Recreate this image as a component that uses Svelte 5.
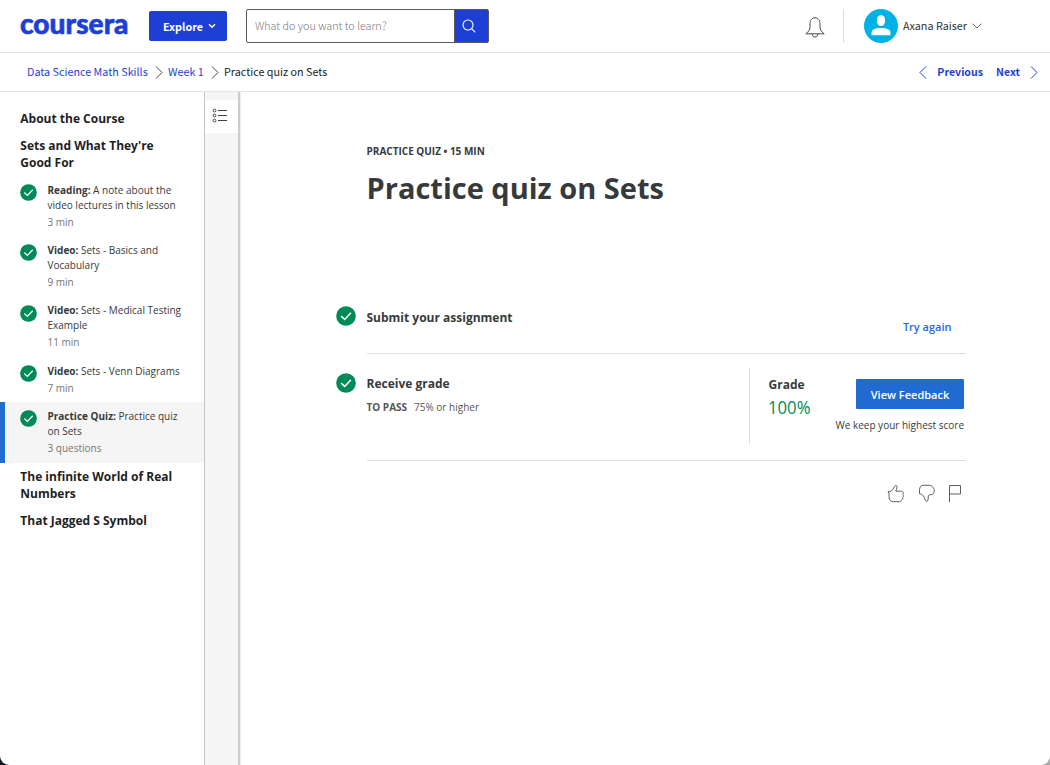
<script>
  const items = [
    { kind: 'Reading:', title: 'A note about the video lectures in this lesson', meta: '3 min' },
    { kind: 'Video:', title: 'Sets - Basics and Vocabulary', meta: '9 min' },
    { kind: 'Video:', title: 'Sets - Medical Testing Example', meta: '11 min' },
    { kind: 'Video:', title: 'Sets - Venn Diagrams', meta: '7 min' },
    { kind: 'Practice Quiz:', title: 'Practice quiz on Sets', meta: '3 questions', active: true }
  ];
</script>

{#snippet check(size)}
  <svg class="check" width={size} height={size} viewBox="0 0 20 20">
    <circle cx="10" cy="10" r="9.8" fill="#008a57" />
    <path d="M5.1 10.1 8.7 13.4 15 6.7" fill="none" stroke="#fff" stroke-width="1.5" />
  </svg>
{/snippet}

{#snippet chevron(d, color)}
  <svg class="chevron" width="8" height="13" viewBox="0 0 8 13"><path {d} fill="none" stroke={color} /></svg>
{/snippet}

<div class="page">
  <header>
    <svg class="logo" width="110" height="40" viewBox="0 0 110 40">
      <text x="0" y="26.6" textLength="108.5" lengthAdjust="spacingAndGlyphs">coursera</text>
    </svg>
    <button class="explore"><span>Explore</span>
      <svg width="8" height="6" viewBox="0 0 8 6"><path d="M1 1.2 4 4.200 7 1.200" fill="none" stroke="#fff" stroke-width="1.500" /></svg>
    </button>
    <div class="search">
      <span class="placeholder">What do you want to learn?</span>
      <span class="go">
        <svg width="14" height="14" viewBox="0 0 14 14"><g fill="none" stroke="#fff" stroke-width="1.100"><circle cx="6" cy="6" r="5" /><path d="M9.600 9.600 13.300 13.300" /></g></svg>
      </span>
    </div>
    <svg class="bell" width="20" height="21" viewBox="0 0 20 21">
      <g fill="none" stroke="#444b52">
        <path d="M.8 16.800C3.600 14.800 5 12.800 5 9.800V6.800C5 3.400 6.900.8 10 .8s5 2.600 5 6v3c0 3 1.400 5 4.200 7z" stroke-linejoin="round" />
        <path d="M7.200 17c.2 2 1.300 3 2.800 3s2.600-1 2.800-3" />
      </g>
    </svg>
    <div class="divider"></div>
    <svg class="avatar" width="34" height="34" viewBox="0 0 34 34">
      <circle cx="17" cy="17" r="17" fill="#00b2e3" />
      <ellipse cx="17" cy="11.500" rx="4.200" ry="5.500" fill="#fff" />
      <path d="M7.500 26.200v-2.400C7.500 20.500 11 19 17 19s9.500 1.500 9.500 4.800v2.400z" fill="#fff" />
    </svg>
    <span class="user">Axana Raiser</span>
    <svg class="caret" width="10" height="6" viewBox="0 0 10 6"><path d="M.7.7 5 5 9.300.7" fill="none" stroke="#666" /></svg>
  </header>

  <nav>
    <span class="crumb link">Data Science Math Skills</span>
    {@render chevron('M1 .5 7 6.500 1 12.500', '#444')}
    <span class="crumb link">Week 1</span>
    {@render chevron('M1 .5 7 6.500 1 12.500', '#444')}
    <span class="crumb">Practice quiz on Sets</span>
    <span class="grow"></span>
    {@render chevron('M7 .5 1 6.500 7 12.500', '#1d3fd6')}
    <span class="step">Previous</span>
    <span class="step next">Next</span>
    {@render chevron('M1 .5 7 6.500 1 12.500', '#1d3fd6')}
  </nav>

  <div class="body">
    <aside>
      <h3>About the Course</h3>
      <h3>Sets and What They're Good For</h3>
      <ul>
        {#each items as it}
          <li class:active={it.active}>
            {@render check(17)}
            <div><p><b>{it.kind}</b> {it.title}</p><p class="meta">{it.meta}</p></div>
          </li>
        {/each}
      </ul>
      <h3>The infinite World of Real Numbers</h3>
      <h3>That Jagged S Symbol</h3>
    </aside>
    <div class="rail">
      <div class="tab">
        <svg width="16" height="15" viewBox="0 0 16 15"><g fill="none" stroke="#444"><circle cx="2.500" cy="2.500" r="1.400" /><circle cx="2.500" cy="7.500" r="1.400" /><circle cx="2.500" cy="12.500" r="1.400" /><path d="M6 2.500h9M6 7.500h9M6 12.500h9" /></g></svg>
      </div>
    </div>
    <main>
      <p class="kicker">PRACTICE QUIZ • 15 MIN</p>
      <h1>Practice quiz on Sets</h1>
      <section class="submit">
        {@render check(20)}
        <div class="content">
          <h2>Submit your assignment</h2>
          <span class="again">Try again</span>
        </div>
      </section>
      <section class="receive">
        {@render check(20)}
        <div class="content">
          <div class="left"><h2>Receive grade</h2><p class="pass"><b>TO PASS</b><span>75% or higher</span></p></div>
          <div class="grade"><h2>Grade</h2><strong>100%</strong></div>
          <div class="feedback"><button>View Feedback</button><p>We keep your highest score</p></div>
        </div>
      </section>
      <div class="reactions">
        <svg width="18" height="19" viewBox="0 0 18 19"><path d="M1 7.700h1.800C5.200 6.900 6.400 4.600 7.500 2.500 8.200.9 10.400 1.300 10.100 3.200c-.2 1.400-.8 2.700-1.300 4h4.800c1.600 0 2.700.8 2.700 2 0 .5-.2.900-.5 1.200.7.500.9 1.200.6 2.100-.1.500-.4.900-.8 1.200.3.600.2 1.300-.2 1.800-.3.400-.7.600-1 .7-.1 1-.9 1.500-1.900 1.500H6.200c-2.700 0-4.200-2.200-4.200-5V9.600L1 7.700" /></svg>
        <svg width="18" height="19" viewBox="0 0 18 19"><path d="M1.500 9.800V5.700C1.700 3 3 1.300 5.600 1.300h6.100c1.500 0 2.300.6 2.600 1.500 1.400.8 2 2.300 1.900 4.200 0 2.300-1.300 3.600-3.200 3.700-1.500.1-2.300.2-2.600 1.100-.5 1.400.1 2.700-.4 4.200-.5 1.600-2.300 1.500-2.600.1-.6-2-1.600-3.800-3-5.200-1.200-1-2.100-1.100-2.900-1.100" /></svg>
        <svg class="flag" width="14" height="19" viewBox="0 0 14 19"><path d="M1.500 18V1.500h11v8.500h-11" /></svg>
      </div>
    </main>
  </div>
</div>

<style>
  :global(body) { margin: 0; overflow: hidden; background: linear-gradient(90deg, #0a1320 50%, #aaa 50%); }
  .page { width: 1050px; height: 765px; overflow: hidden; background: #fff; border-radius: 0 0 9px 9px; font-family: "Open Sans", sans-serif; color: #373a3c; }
  p, h1, h2, h3, ul { margin: 0; padding: 0; }
  header, nav { display: flex; align-items: center; box-sizing: border-box; font-family: "Noto Sans CJK SC", sans-serif; white-space: nowrap; }
  header { height: 53px; border-bottom: 1px solid #e5e5e5; padding-left: 20px; }
  .logo { margin-top: 2px; overflow: visible; }
  .logo text { font: 900 28px Lato, sans-serif; fill: #1d3fd6; stroke: #1d3fd6; stroke-width: .6; }
  .explore { margin-left: 19px; width: 78px; height: 30px; background: #1d3fd6; color: #fff; border: 0; border-radius: 2px; font: 700 10.8px "Noto Sans CJK SC", sans-serif; padding: 0 0 1px 3px; display: flex; align-items: center; justify-content: center; gap: 5px; }
  .search { margin-left: 19px; width: 243px; height: 34px; box-sizing: border-box; border: 1px solid #5a5a5a; display: flex; border-radius: 2px; }
  .placeholder { width: 199px; padding-left: 8px; font: 300 10.77px/31px "Noto Sans CJK SC", sans-serif; color: #777; }
  .go { flex: 1; background: #1d3fd6; border-left: 1px solid #5a5a5a; display: flex; align-items: center; justify-content: center; padding: 0 5px 1px 0; }
  .bell { margin: 3px 0 0 316px; }
  .divider { width: 1px; height: 34px; background: #ddd; margin: 0 20px 0 18px; }
  .user { font-size: 10.8px; margin: -2px 0 0 5px; color: #333; }
  .caret { margin-left: 5px; }
  nav { height: 39px; border-bottom: 1px solid #e5e5e5; padding: 0 12px 1px 27px; font-size: 10.77px; color: #222; }
  .link { color: #1d3fd6; }
  .chevron { margin: 1px 0 0; }
  .crumb + .chevron { margin: 1px 5.500px 0 6.800px; }
  .grow { flex: 1; }
  .step { color: #1d3fd6; font-size: 10.6px; font-weight: 700; margin-left: 10px; }
  .next { margin: 0 10px 0 13px; }
  .body { display: flex; height: 673px; }
  aside { width: 204px; padding-top: 18px; box-sizing: border-box; }
  h3 { font-size: 12px; line-height: 17px; font-weight: 700; padding: 0 20px 0 20.3px; margin-bottom: 10px; color: #1f1f1f; }
  ul { list-style: none; margin: -5px 0 5.500px; }
  li { display: flex; padding: 6.800px 18px 4.500px 20px; gap: 10.500px; font-size: 10px; line-height: 15px; }
  li .check { margin-top: 1.200px; }
  li.active { background: #f5f5f5; padding-left: 15px; padding-bottom: 5px; border-left: 5px solid #1f6bd2; }
  .meta { line-height: 19px; color: #757575; }
  .check { flex: none; }
  .rail { width: 33px; background: #f5f5f5; border-left: 1px solid #c7c7c7; }
  .tab { margin-top: 8px; height: 33px; background: #fff; display: flex; align-items: center; justify-content: center; padding: 0 3px 3px 0; box-sizing: border-box; }
  main { flex: 1; padding: 52px 84px 0 96.500px; border-left: 2px solid #ccc; box-shadow: inset 1px 0 0 #eee; }
  .kicker { font-size: 10px; line-height: 15px; font-weight: 700; padding-left: 30px; }
  h1 { font-size: 29px; line-height: 40px; padding-left: 30px; margin-top: 9px; }
  section { display: flex; gap: 10px; }
  section > .check { margin-left: -.5px; margin-right: .5px; }
  .submit { margin-top: 98px; }
  .content { flex: 1; display: flex; border-bottom: 1px solid #dedede; }
  .submit .content { height: 47px; justify-content: space-between; }
  h2 { font-size: 12px; line-height: 20px; }
  .submit h2 { margin-top: 2px; }
  .again { font-weight: 600; font-size: 11px; line-height: 20px; margin: 11px 14.500px 0 0; color: #1f6bd2; }
  .receive { margin-top: 14px; }
  .receive > .check { margin-top: 5px; }
  .receive .content { height: 92px; }
  .left { width: 382.500px; flex: none; margin-top: 6px; }
  .pass { display: flex; gap: 7px; font-size: 10px; line-height: 15px; margin-top: 6px; color: #555; }
  .grade { border-left: 1px solid #dedede; height: 77px; padding: 7px 0 0 18.500px; box-sizing: border-box; }
  .grade strong { display: block; font-weight: 400; font-size: 19px; line-height: 26px; margin: -1px 0 0 -.5px; color: #008a57; transform: scaleX(.88); transform-origin: left; }
  .feedback { margin: 11px 2px 0 auto; display: flex; flex-direction: column; align-items: flex-end; white-space: nowrap; }
  .feedback button { font: 600 11px "Open Sans", sans-serif; width: 108px; height: 30px; border: 0; border-radius: 1px; padding: 1px 0 0; color: #fff; background: #1f6bd2; }
  .feedback p { font-size: 10px; line-height: 15px; margin-top: 9px; }
  .reactions { display: flex; justify-content: flex-end; gap: 13px; margin: 23px 4px 0 0; }
  .reactions path { fill: none; stroke: #4a4e52; stroke-width: .9; stroke-linejoin: round; }
  .flag { margin-left: -1px; }
</style>
